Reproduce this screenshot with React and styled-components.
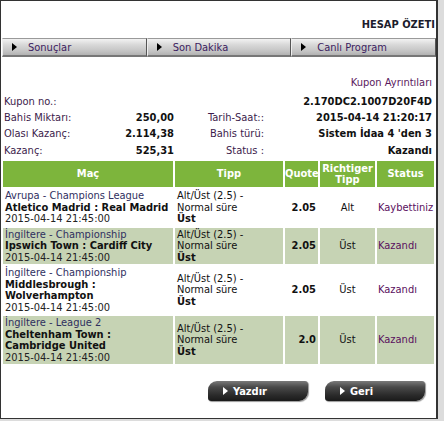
import React from 'react';
import styled, { createGlobalStyle } from 'styled-components';

const GlobalStyle = createGlobalStyle`
  body {
    margin: 0;
    background: #dcdcdc;
    font-family: "DejaVu Sans Condensed", "DejaVu Sans", Verdana, sans-serif;
    font-size: 11px;
  }
`;

// 전체 프레임
const Frame = styled.div`
  width: 438px;
  height: 419px;
  box-sizing: border-box;
  background: #fff;
  border: 1px solid #333;
  border-right-width: 2px;
  display: flex;
  flex-direction: column;
`;

const Title = styled.div`
  margin-top: 17px;
  height: 14px;
  line-height: 14px;
  padding-right: 1px;
  text-align: right;
  font-weight: bold;
  color: #1c1c2c;
`;

// 상단 탭 바
const NavBar = styled.div`
  margin: 6px 0 0 1px;
  display: flex;
  height: 19px;
`;

const NavTab = styled.div`
  flex: 1;
  display: flex;
  align-items: center;
  gap: 11px;
  padding-left: 9px;
  box-sizing: border-box;
  background: linear-gradient(#f2f2f2 0%, #d9d9d9 35%, #c4c4c4 75%, #b2b2b2 100%);
  border-top: 1px solid #9a9a9a;
  border-left: 1px solid #eee;
  border-right: 1px solid #555;
  border-bottom: 2px solid #777;
  color: #3b2160;
`;

const Arrow = styled.span`
  width: 0;
  height: 0;
  border-top: 4px solid transparent;
  border-bottom: 4px solid transparent;
  border-left: 5px solid ${(p) => p.$color || '#000'};
`;

const SubTitle = styled.div`
  margin-top: 19px;
  padding-right: 4px;
  text-align: right;
  color: #5a1a5e;
  line-height: 14px;
`;

// 쿠폰 정보
const InfoGrid = styled.div`
  margin-top: 3px;
  display: grid;
  grid-template-columns: 100px 70px 90px 1fr;
  grid-auto-rows: 16.3px;
  align-items: center;
  padding: 0 4px 0 3px;
`;

const Label = styled.div`
  color: #3c1c4c;
  text-align: ${(p) => (p.$right ? 'right' : 'left')};
  white-space: nowrap;
`;

const Value = styled.div`
  font-weight: bold;
  color: #111;
  text-align: right;
  white-space: nowrap;
`;

// 경기 테이블
const Table = styled.table`
  margin: 1px 0 0 0;
  width: 435px;
  border-collapse: separate;
  border-spacing: 2px;
  table-layout: fixed;
`;

const Th = styled.th`
  background: #7db53c;
  color: #fff;
  font-weight: bold;
  height: 26px;
  padding: 0;
  line-height: 11.5px;
  text-align: center;
`;

const Td = styled.td`
  background: ${(p) => (p.$alt ? '#c6d3b4' : '#fff')};
  padding: 1px ${(p) => (p.$tight ? '1px' : '2px')};
  line-height: 11.5px;
  vertical-align: middle;
  color: #111;
  text-align: ${(p) => p.$align || 'left'};
  font-weight: ${(p) => (p.$bold ? 'bold' : 'normal')};
  white-space: ${(p) => (p.$tight ? 'nowrap' : 'normal')};
  overflow: hidden;
`;

const League = styled.div`
  color: #2f2f5f;
`;

const Teams = styled.div`
  font-weight: bold;
  color: #111;
`;

const DateLine = styled.div`
  color: #222;
`;

const Status = styled.span`
  color: #5a0f5e;
`;

// 하단 버튼
const ButtonRow = styled.div`
  margin-top: 15px;
  display: flex;
  justify-content: flex-end;
  gap: 17px;
  padding-right: 11px;
`;

const DarkButton = styled.div`
  width: 100px;
  height: 20px;
  box-sizing: border-box;
  display: flex;
  align-items: center;
  gap: 5px;
  padding-left: 15px;
  border-radius: 9px 3px 9px 3px;
  background: linear-gradient(#7a7a7a 0%, #4a4a4a 30%, #2b2b2b 70%, #1a1a1a 100%);
  box-shadow: 1px 1px 1px #999;
  color: #fff;
  font-weight: bold;
`;

const rows = [
  {
    league: 'Avrupa - Champions League',
    teams: 'Atletico Madrid : Real Madrid',
    quote: '2.05',
    tipp: 'Alt',
    status: 'Kaybettiniz',
  },
  {
    league: 'İngiltere - Championship',
    teams: 'Ipswich Town : Cardiff City',
    quote: '2.05',
    tipp: 'Üst',
    status: 'Kazandı',
  },
  {
    league: 'İngiltere - Championship',
    teams: 'Middlesbrough : Wolverhampton',
    quote: '2.05',
    tipp: 'Üst',
    status: 'Kazandı',
  },
  {
    league: 'İngiltere - League 2',
    teams: 'Cheltenham Town : Cambridge United',
    quote: '2.0',
    tipp: 'Üst',
    status: 'Kazandı',
  },
];

const App = () => {
  return (
    <>
      <GlobalStyle />
      <Frame>
        <Title>HESAP ÖZETI</Title>
        <NavBar>
          <NavTab><Arrow />Sonuçlar</NavTab>
          <NavTab><Arrow />Son Dakika</NavTab>
          <NavTab><Arrow />Canlı Program</NavTab>
        </NavBar>

        <SubTitle>Kupon Ayrıntıları</SubTitle>
        <InfoGrid>
          <Label>Kupon no.:</Label>
          <div />
          <div />
          <Value>2.170DC2.1007D20F4D</Value>

          <Label>Bahis Miktarı:</Label>
          <Value>250,00</Value>
          <Label $right>Tarih-Saat::</Label>
          <Value>2015-04-14 21:20:17</Value>

          <Label>Olası Kazanç:</Label>
          <Value>2.114,38</Value>
          <Label $right>Bahis türü:</Label>
          <Value>Sistem İdaa 4 'den 3</Value>

          <Label>Kazanç:</Label>
          <Value>525,31</Value>
          <Label $right>Status :</Label>
          <Value>Kazandı</Value>
        </InfoGrid>

        <Table>
          <colgroup>
            <col style={{ width: '170px' }} />
            <col style={{ width: '108px' }} />
            <col style={{ width: '33px' }} />
            <col style={{ width: '55px' }} />
            <col style={{ width: '57px' }} />
          </colgroup>
          <thead>
            <tr>
              <Th>Maç</Th>
              <Th>Tipp</Th>
              <Th>Quote</Th>
              <Th>Richtiger Tipp</Th>
              <Th>Status</Th>
            </tr>
          </thead>
          <tbody>
            {rows.map((r, i) => (
              <tr key={i}>
                <Td $alt={i % 2 === 1}>
                  <League>{r.league}</League>
                  <Teams>{r.teams}</Teams>
                  <DateLine>2015-04-14 21:45:00</DateLine>
                </Td>
                <Td $alt={i % 2 === 1}>
                  Alt/Üst (2.5) -<br />
                  Normal süre<br />
                  <b>Üst</b>
                </Td>
                <Td $alt={i % 2 === 1} $align="right" $bold>{r.quote}</Td>
                <Td $alt={i % 2 === 1} $align="center">{r.tipp}</Td>
                <Td $alt={i % 2 === 1} $tight><Status>{r.status}</Status></Td>
              </tr>
            ))}
          </tbody>
        </Table>

        <ButtonRow>
          <DarkButton><Arrow $color="#fff" />Yazdır</DarkButton>
          <DarkButton><Arrow $color="#fff" />Geri</DarkButton>
        </ButtonRow>
      </Frame>
    </>
  );
};

export default App;
